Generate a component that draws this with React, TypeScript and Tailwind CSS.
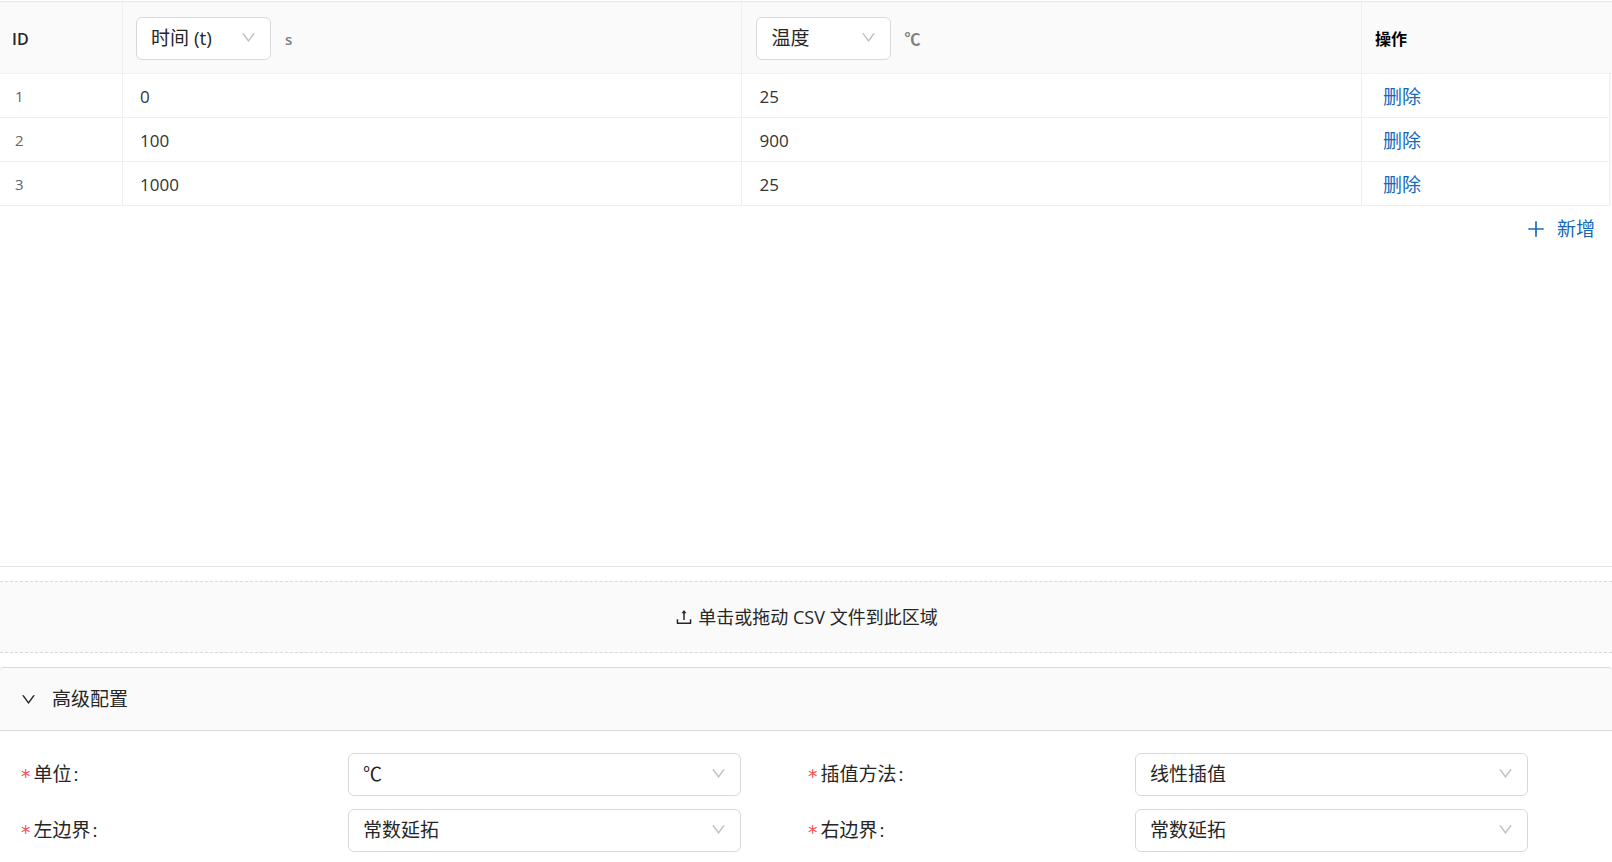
import { useState } from "react"
import { AiOutlineDown, AiOutlinePlus, AiOutlineUpload } from "react-icons/ai"

const initialRows = [
  { time: "0", temperature: "25" },
  { time: "100", temperature: "900" },
  { time: "1000", temperature: "25" },
]

const fields = [
  { id: "unit", label: "单位", options: ["℃", "K"] },
  { id: "method", label: "插值方法", options: ["线性插值", "样条插值"] },
  { id: "left", label: "左边界", options: ["常数延拓", "线性延拓"] },
  { id: "right", label: "右边界", options: ["常数延拓", "线性延拓"] },
]

type SelectProps = {
  id?: string
  label?: string
  options: string[]
}

function Select({ id, label, options }: SelectProps) {
  return (
    <div className="relative w-full">
      <select
        id={id}
        aria-label={label}
        className="block h-[43px] w-full appearance-none rounded-md border border-[#d9d9d9] bg-white pr-10 pl-[14px] text-[19px] font-normal text-[#262626] outline-none"
      >
        {options.map((option) => (
          <option key={option}>{option}</option>
        ))}
      </select>
      <AiOutlineDown className="pointer-events-none absolute top-3 right-[14px] size-[17px] text-[#bfbfbf]" />
    </div>
  )
}

function Cell({ label, value }: { label: string; value: string }) {
  return (
    <input
      aria-label={label}
      defaultValue={value}
      className="block h-[43px] w-full bg-transparent pt-0.5 pl-[17px] text-[17px] text-[#333333] outline-none"
    />
  )
}

export default function App() {
  const [rows, setRows] = useState(initialRows)
  const [open, setOpen] = useState(true)

  return (
    <main className="bg-white font-['Open_Sans','Noto_Sans_CJK_SC',sans-serif] text-[#262626]">
      <section className="mt-px h-[566px] border-y border-[#e8e8e8]">
        <table className="w-full table-fixed border-separate border-spacing-0">
          <colgroup>
            <col className="w-[123px]" />
            <col />
            <col />
            <col className="w-[248px]" />
            <col className="w-0.5" />
          </colgroup>
          <thead className="bg-[#fafafa] text-left">
            <tr className="h-[72px]">
              <th className="border-r border-b border-[#f0f0f0] pt-0.5 pl-3 text-base font-semibold">ID</th>
              <th className="border-r border-b border-[#f0f0f0] pt-0.5 pl-[13px]">
                <div className="flex items-center gap-[14px]">
                  <div className="w-[135px]">
                    <Select label="自变量" options={["时间 (t)", "温度"]} />
                  </div>
                  <span className="pt-0.5 text-[15px] font-semibold text-[#808080]">s</span>
                </div>
              </th>
              <th className="border-r border-b border-[#f0f0f0] pt-0.5 pl-[14px]">
                <div className="flex items-center gap-[13px]">
                  <div className="w-[135px]">
                    <Select label="因变量" options={["温度", "时间 (t)"]} />
                  </div>
                  <span className="text-base font-bold text-[#808080]">℃</span>
                </div>
              </th>
              <th colSpan={2} className="border-b border-[#f0f0f0] pt-0.5 pl-[13px] text-base font-bold text-black">
                操作
              </th>
            </tr>
          </thead>
          <tbody>
            {rows.map((row, index) => (
              <tr key={row.time} className="h-11">
                <td className="border-r border-b border-[#f0f0f0] pl-[15px] text-[15px] leading-5 text-[#666666]">{index + 1}</td>
                <td className="border-r border-b border-[#f0f0f0]">
                  <Cell label="时间" value={row.time} />
                </td>
                <td className="border-r border-b border-[#f0f0f0]">
                  <Cell label="温度" value={row.temperature} />
                </td>
                <td className="border-r border-b border-[#f0f0f0] pt-0.5 pl-[21px]">
                  <button
                    type="button"
                    onClick={() => setRows(rows.filter((item) => item !== row))}
                    className="block text-[19px] leading-6 text-[#1668b8]"
                  >
                    删除
                  </button>
                </td>
                <td className="bg-[#fafafa]" />
              </tr>
            ))}
          </tbody>
        </table>
        <div className="flex justify-end pr-[17px]">
          <button
            type="button"
            onClick={() => setRows([...rows, { time: String(Date.now()), temperature: "25" }])}
            className="flex h-[46px] items-center gap-2.5 text-[19px] text-[#1668b8]"
          >
            <AiOutlinePlus className="size-[22px]" />
            新增
          </button>
        </div>
      </section>

      <button
        type="button"
        className="mt-[14px] flex h-[72px] w-full items-center justify-center gap-1 border-y border-dashed border-[#d9d9d9] bg-[#fafafa] text-[18px]"
      >
        <AiOutlineUpload className="size-5" />
        <span>单击或拖动 CSV 文件到此区域</span>
      </button>

      <section className="mt-[14px]">
        <button
          type="button"
          aria-expanded={open}
          onClick={() => setOpen(!open)}
          className="flex h-16 w-full items-center gap-[15px] rounded-t-sm border-y border-[#d9d9d9] bg-[#fafafa] pl-5 text-[19px]"
        >
          <AiOutlineDown className="size-[17px]" />
          高级配置
        </button>
        {open && (
          <form className="grid grid-cols-2 gap-y-[13px] pt-[22px] pr-[18px] pb-2 pl-5">
            {fields.map((field) => (
              <div key={field.id} className="flex items-center">
                <label htmlFor={field.id} className="flex w-5/12 items-center text-[19px]">
                  <span className="mr-0.5 pt-1 font-['DejaVu_Sans_Mono',monospace] text-[#ff4d4f]">*</span>
                  {field.label}
                  <span className="ml-0.5">:</span>
                </label>
                <div className="w-1/2">
                  <Select id={field.id} options={field.options} />
                </div>
              </div>
            ))}
          </form>
        )}
      </section>
    </main>
  )
}
